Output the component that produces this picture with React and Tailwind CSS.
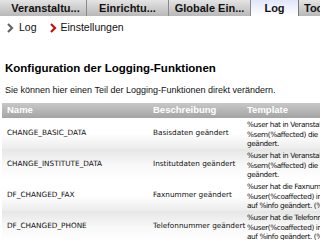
import React from "react";

const rows = [
  {
    name: "CHANGE_BASIC_DATA",
    desc: "Basisdaten geändert",
    tpl: ["%user hat in Veranstaltung", "%sem(%affected) die Basisdaten", "geändert."],
  },
  {
    name: "CHANGE_INSTITUTE_DATA",
    desc: "Institutdaten geändert",
    tpl: ["%user hat in Veranstaltung", "%sem(%affected) die Daten", "geändert."],
  },
  {
    name: "DF_CHANGED_FAX",
    desc: "Faxnummer geändert",
    tpl: ["%user hat die Faxnummer von", "%user(%coaffected) in %sem", "auf %info geändert. (%dbg)"],
  },
  {
    name: "DF_CHANGED_PHONE",
    desc: "Telefonnummer geändert",
    tpl: ["%user hat die Telefonnummer von", "%user(%coaffected) in %sem", "auf %info geändert. (%dbg)"],
  },
];

function Chevron({ color }) {
  return (
    <svg width="7" height="10" viewBox="0 0 7 10" className="shrink-0">
      <path d="M1 1 L5 5 L1 9" fill="none" stroke={color} strokeWidth="2.2" />
    </svg>
  );
}

export default function App() {
  const tabs = ["Veranstaltu...", "Einrichtu...", "Globale Ein..."];
  return (
    <div className="w-[320px] h-[240px] overflow-hidden bg-white font-['Liberation_Sans',sans-serif]">
      <div className="w-[420px]">
        {/* tab bar */}
        <div className="flex h-[16px] bg-gradient-to-b from-[#e4e4e4] to-[#b8b8b8] text-[11px] font-bold text-[#111]">
          <div className="w-[5px]" />
          {tabs.map((t, i) => (
            <div key={i} className="flex items-center justify-center w-[82px] border-r border-[#8a8a8a] leading-none">
              {t}
            </div>
          ))}
          <div className="flex items-center justify-center w-[48px] bg-gradient-to-b from-[#dfe6f7] to-white leading-none border-r border-[#777]">
            Log
          </div>
          <div className="flex items-center pl-[5px] leading-none">Tools</div>
        </div>
        {/* breadcrumb */}
        <div className="flex items-center h-[22px] mt-[1px] pl-[7px] text-[10.5px] text-[#111]">
          <Chevron color="#666" />
          <span className="ml-[5px]">Log</span>
          <span className="ml-[13px]"><Chevron color="#c81010" /></span>
          <span className="ml-[4px]">Einstellungen</span>
        </div>
        {/* heading */}
        <div className="pl-[5px] mt-[22px] text-[11.5px] font-bold text-black leading-[14px]">
          Konfiguration der Logging-Funktionen
        </div>
        <div className="pl-[5px] mt-[9px] text-[9px] text-[#111] leading-[12px]">
          Sie können hier einen Teil der Logging-Funktionen direkt verändern.
        </div>
        {/* table */}
        <div className="mt-[7px] mx-[2px] text-[7.3px] text-[#111] font-['DejaVu_Sans',sans-serif]">
          <div className="flex h-[15px] items-center bg-gradient-to-b from-[#c8c8c8] to-[#a4a4a4] text-white font-bold text-[9.5px] font-['Liberation_Sans',sans-serif]">
            <div className="w-[146px] pl-[5px]">Name</div>
            <div className="w-[94px] pl-[5px]">Beschreibung</div>
            <div className="pl-[5px]">Template</div>
          </div>
          {rows.map((r, i) => (
            <div
              key={i}
              className={
                "flex items-center h-[31px] " +
                (i % 2 === 0
                  ? "bg-gradient-to-b from-white via-white to-[#ececec]"
                  : "bg-gradient-to-b from-[#e6e6e6] via-[#f8f8f8] to-white")
              }
            >
              <div className="w-[146px] pl-[5px] whitespace-nowrap">{r.name}</div>
              <div className="w-[94px] pl-[5px] whitespace-nowrap">{r.desc}</div>
              <div className="pl-[5px] pt-[2px] leading-[9.5px] whitespace-nowrap tracking-[-0.4px]">
                {r.tpl.map((l, j) => (
                  <div key={j}>{l}</div>
                ))}
              </div>
            </div>
          ))}
        </div>
      </div>
    </div>
  );
}
